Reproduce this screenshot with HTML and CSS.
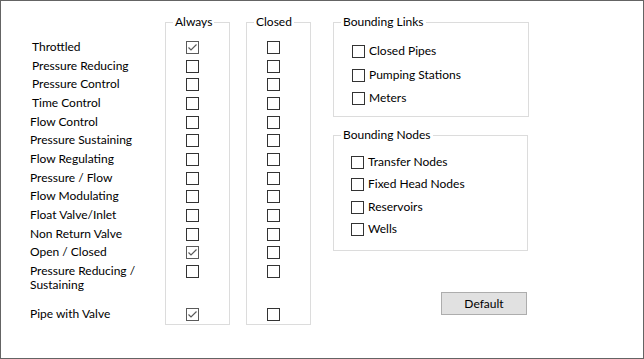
FILE: index.html
```html
<!DOCTYPE html>
<html>
<head>
<meta charset="utf-8">
<link rel="stylesheet" href="styles.css">
</head>
<body>
<div class="frame">
  <div class="labels">
    <div class="row indent">Throttled</div>
    <div class="row indent">Pressure Reducing</div>
    <div class="row indent">Pressure Control</div>
    <div class="row indent">Time Control</div>
    <div class="row">Flow Control</div>
    <div class="row">Pressure Sustaining</div>
    <div class="row">Flow Regulating</div>
    <div class="row">Pressure / Flow</div>
    <div class="row">Flow Modulating</div>
    <div class="row">Float Valve/Inlet</div>
    <div class="row">Non Return Valve</div>
    <div class="row">Open / Closed</div>
    <div class="row tall">Pressure Reducing /<br>Sustaining</div>
    <div class="row">Pipe with Valve</div>
  </div>

  <div class="group col">
    <span class="group-title">Always</span>
    <div class="row"><span class="cb checked"><svg viewBox="0 0 11 11"><path d="M1.5 5.5 L4 8 L9.5 2.5"/></svg></span></div>
    <div class="row"><span class="cb"></span></div>
    <div class="row"><span class="cb"></span></div>
    <div class="row"><span class="cb"></span></div>
    <div class="row"><span class="cb"></span></div>
    <div class="row"><span class="cb"></span></div>
    <div class="row"><span class="cb"></span></div>
    <div class="row"><span class="cb"></span></div>
    <div class="row"><span class="cb"></span></div>
    <div class="row"><span class="cb"></span></div>
    <div class="row"><span class="cb"></span></div>
    <div class="row"><span class="cb checked"><svg viewBox="0 0 11 11"><path d="M1.5 5.5 L4 8 L9.5 2.5"/></svg></span></div>
    <div class="row tall"><span class="cb"></span></div>
    <div class="row"><span class="cb checked"><svg viewBox="0 0 11 11"><path d="M1.5 5.5 L4 8 L9.5 2.5"/></svg></span></div>
  </div>

  <div class="group col closed">
    <span class="group-title">Closed</span>
    <div class="row"><span class="cb"></span></div>
    <div class="row"><span class="cb"></span></div>
    <div class="row"><span class="cb"></span></div>
    <div class="row"><span class="cb"></span></div>
    <div class="row"><span class="cb"></span></div>
    <div class="row"><span class="cb"></span></div>
    <div class="row"><span class="cb"></span></div>
    <div class="row"><span class="cb"></span></div>
    <div class="row"><span class="cb"></span></div>
    <div class="row"><span class="cb"></span></div>
    <div class="row"><span class="cb"></span></div>
    <div class="row"><span class="cb"></span></div>
    <div class="row tall"><span class="cb"></span></div>
    <div class="row"><span class="cb"></span></div>
  </div>

  <div class="right">
    <div class="group links">
      <span class="group-title">Bounding Links</span>
      <div class="opt"><span class="cb"></span><span class="opt-label">Closed Pipes</span></div>
      <div class="opt"><span class="cb"></span><span class="opt-label">Pumping Stations</span></div>
      <div class="opt"><span class="cb"></span><span class="opt-label">Meters</span></div>
    </div>
    <div class="group nodes">
      <span class="group-title">Bounding Nodes</span>
      <div class="opt"><span class="cb"></span><span class="opt-label">Transfer Nodes</span></div>
      <div class="opt"><span class="cb"></span><span class="opt-label">Fixed Head Nodes</span></div>
      <div class="opt"><span class="cb"></span><span class="opt-label">Reservoirs</span></div>
      <div class="opt"><span class="cb"></span><span class="opt-label">Wells</span></div>
    </div>
    <button class="btn">Default</button>
  </div>
</div>
</body>
</html>
```

FILE: styles.css
```css
html, body {
  margin: 0;
  padding: 0;
  background: #fff;
}

.frame {
  width: 644px;
  height: 359px;
  box-sizing: border-box;
  border: 1px solid #646464;
  padding: 21px 0 0 29px;
  display: flex;
  align-items: flex-start;
  font-family: Lato, "Noto Sans", sans-serif;
  font-size: 12px;
  color: #000;
  background: #fff;
}

.labels {
  width: 135px;
  padding-top: 18px;
}

.row {
  height: 18.667px;
  line-height: 13px;
  white-space: nowrap;
}

.row.tall {
  height: 43px;
  line-height: 14px;
}

.labels .indent {
  padding-left: 2px;
}

.group {
  position: relative;
  box-sizing: border-box;
  border: 1px solid #dcdcdc;
}

.group-title {
  position: absolute;
  top: -9px;
  left: 7px;
  padding: 0 2px;
  background: #fff;
  line-height: 16px;
  white-space: nowrap;
}

.col {
  width: 65px;
  height: 303px;
  padding: 18px 0 0 20px;
}

.closed {
  margin-left: 16px;
}

.cb {
  display: block;
  width: 13px;
  height: 13px;
  box-sizing: border-box;
  border: 1px solid #333;
  background: #fff;
  flex: none;
}

.cb.checked {
  border-color: #5a5a5a;
}

.cb svg {
  display: block;
  width: 11px;
  height: 11px;
  fill: none;
  stroke: #5a5a5a;
  stroke-width: 1.2;
}

.right {
  margin-left: 22px;
  width: 196px;
  display: flex;
  flex-direction: column;
  align-items: flex-start;
}

.links {
  width: 196px;
  height: 95px;
  padding: 22px 0 0 18px;
}

.links .opt {
  height: 23.5px;
}

.nodes {
  width: 195px;
  height: 116px;
  margin-top: 18px;
  padding: 20px 0 0 17px;
}

.nodes .opt {
  height: 22.33px;
}

.opt {
  display: flex;
  align-items: flex-start;
}

.opt-label {
  margin: -1px 0 0 4px;
  line-height: 13px;
  white-space: nowrap;
}

.btn {
  margin: 41px 0 0 108px;
  width: 86px;
  height: 23px;
  box-sizing: border-box;
  border: 1px solid #adadad;
  background: #e1e1e1;
  font-family: Lato, "Noto Sans", sans-serif;
  font-size: 12px;
  color: #000;
  padding: 0;
  line-height: 21px;
  border-radius: 0;
}
```
